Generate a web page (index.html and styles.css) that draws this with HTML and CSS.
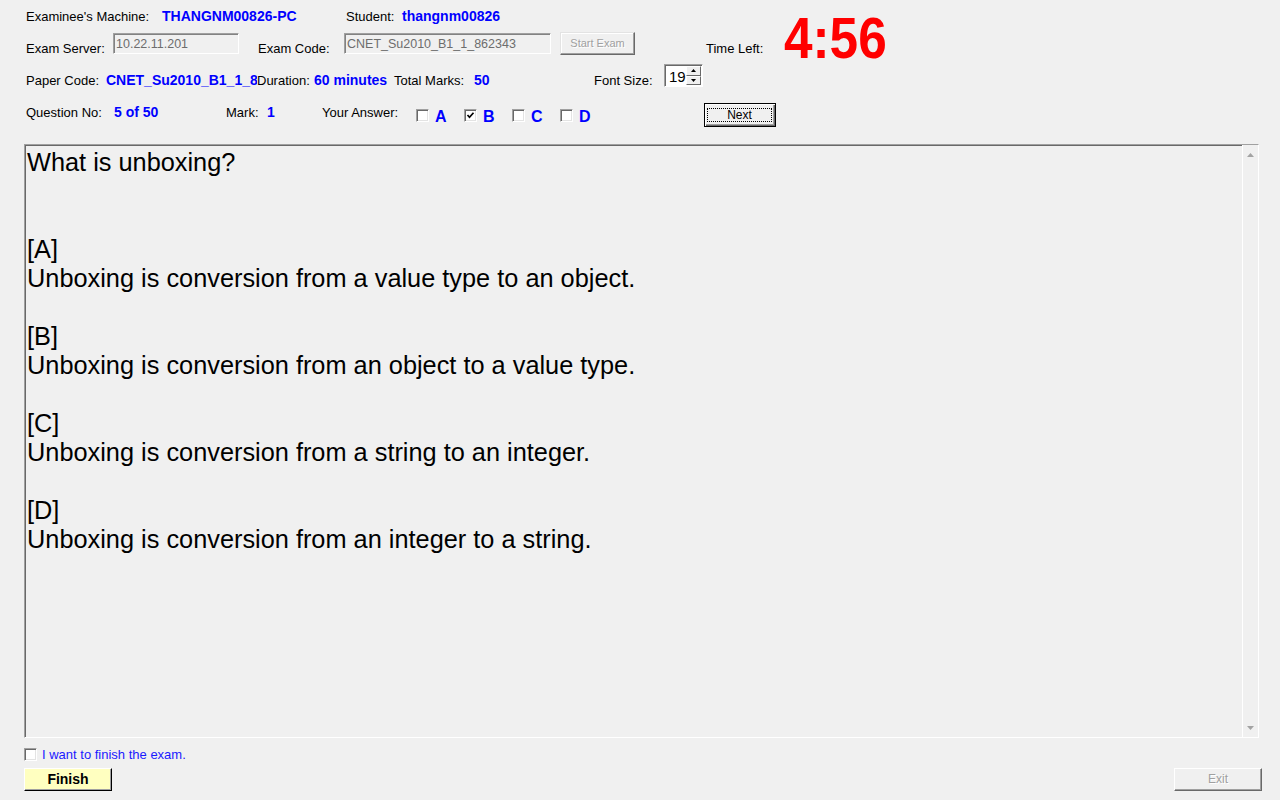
FILE: index.html
```html
<!DOCTYPE html>
<html>
<head>
<meta charset="utf-8">
<title>Exam</title>
<link rel="stylesheet" href="styles.css">
</head>
<body>
<div class="header">
  <div class="row row-1">
    <span class="lbl machine-lbl">Examinee's Machine:</span>
    <span class="val machine-val">THANGNM00826-PC</span>
    <span class="lbl student-lbl">Student:</span>
    <span class="val">thangnm00826</span>
  </div>
  <div class="row row-2">
    <span class="lbl server-lbl">Exam Server:</span>
    <div class="tb server-box">10.22.11.201</div>
    <span class="lbl code-lbl">Exam Code:</span>
    <div class="tb code-box">CNET_Su2010_B1_1_862343</div>
    <div class="btn-disabled start-btn">Start Exam</div>
    <span class="lbl time-lbl">Time Left:</span>
    <span class="timer">4:56</span>
  </div>
  <div class="row row-3">
    <span class="lbl paper-lbl">Paper Code:</span>
    <div class="paper-clip"><span class="val paper-val">CNET_Su2010_B1_1_862343</span></div>
    <span class="lbl dur-lbl">Duration:</span>
    <span class="val dur-val">60 minutes</span>
    <span class="lbl total-lbl">Total Marks:</span>
    <span class="val total-val">50</span>
    <span class="lbl font-lbl">Font Size:</span>
    <div class="spin">
      <span class="spin-val">19</span>
      <div class="spin-btns">
        <div class="spin-btn"><svg width="5" height="3" viewBox="0 0 5 3"><polygon points="0,3 2.5,0 5,3" fill="#000"/></svg></div>
        <div class="spin-btn"><svg width="5" height="3" viewBox="0 0 5 3"><polygon points="0,0 2.5,3 5,0" fill="#000"/></svg></div>
      </div>
    </div>
  </div>
  <div class="row row-4">
    <span class="lbl qno-lbl">Question No:</span>
    <span class="val qno-val">5 of 50</span>
    <span class="lbl mark-lbl">Mark:</span>
    <span class="val mark-val">1</span>
    <span class="lbl ans-lbl">Your Answer:</span>
    <div class="opt"><span class="cb"></span><span class="opt-letter">A</span></div>
    <div class="opt"><span class="cb"><svg width="9" height="9" viewBox="0 0 9 9"><polyline points="1.5,4 3.5,6.2 7.5,1.8" fill="none" stroke="#000" stroke-width="1.7"/></svg></span><span class="opt-letter">B</span></div>
    <div class="opt"><span class="cb"></span><span class="opt-letter">C</span></div>
    <div class="opt"><span class="cb"></span><span class="opt-letter">D</span></div>
    <div class="next-btn"><span class="next-focus">Next</span></div>
  </div>
</div>

<div class="question">
  <div class="q-text">
    <div class="line">What is unboxing?</div>
    <div class="line"></div>
    <div class="line"></div>
    <div class="line">[A]</div>
    <div class="line">Unboxing is conversion from a value type to an object.</div>
    <div class="line"></div>
    <div class="line">[B]</div>
    <div class="line">Unboxing is conversion from an object to a value type.</div>
    <div class="line"></div>
    <div class="line">[C]</div>
    <div class="line">Unboxing is conversion from a string to an integer.</div>
    <div class="line"></div>
    <div class="line">[D]</div>
    <div class="line">Unboxing is conversion from an integer to a string.</div>
  </div>
  <div class="scroll">
    <div class="arrow"><svg width="7" height="4" viewBox="0 0 7 4"><polygon points="0,4 3.5,0 7,4" fill="#a3a3a3"/></svg></div>
    <div class="arrow"><svg width="7" height="4" viewBox="0 0 7 4"><polygon points="0,0 3.5,4 7,0" fill="#a3a3a3"/></svg></div>
  </div>
</div>

<div class="finish-check">
  <span class="cb"></span>
  <span class="finish-lbl">I want to finish the exam.</span>
</div>
<div class="actions">
  <div class="finish-btn">Finish</div>
  <div class="exit-btn">Exit</div>
</div>
</body>
</html>
```
FILE: styles.css
```css
* { box-sizing: border-box; }
html, body { margin: 0; padding: 0; }
body {
  width: 1280px;
  height: 800px;
  overflow: hidden;
  background: #f0f0f0;
  font-family: "Liberation Sans", Arial, sans-serif;
  color: #000;
}

.header { padding-left: 26px; }
.row { display: flex; align-items: flex-start; }
.row-1 { height: 30px; }
.row-2 { height: 30px; }
.row-3 { height: 35px; }
.row-4 { height: 49px; }

.lbl { font-size: 13px; line-height: 15px; white-space: nowrap; }
.val { font-size: 14px; line-height: 16px; font-weight: bold; color: #0000ff; white-space: nowrap; }

.row-1 .lbl { margin-top: 9px; }
.row-1 .val { margin-top: 8px; }
.row-2 .lbl { margin-top: 11px; }
.row-3 .lbl { margin-top: 13px; }
.row-3 .val { margin-top: 12px; }
.row-4 .lbl { margin-top: 10px; }
.row-4 .val { margin-top: 9px; }

.machine-lbl { width: 136px; }
.machine-val { width: 184px; }
.student-lbl { width: 56px; }

.server-lbl { width: 87px; }
.server-box { width: 126px; }
.code-lbl { width: 86px; margin-left: 19px; }
.code-box { width: 207px; }
.start-btn { margin-left: 9px; width: 75px; }
.time-lbl { margin-left: 71px; width: 79px; }

.paper-lbl { width: 80px; }
.paper-clip { width: 151px; height: 28px; overflow: hidden; flex: none; }
.paper-val { display: block; }
.dur-lbl { width: 57px; }
.dur-val { width: 80px; }
.total-lbl { width: 80px; }
.total-val { width: 120px; }
.font-lbl { width: 70px; }

.qno-lbl { width: 88px; }
.qno-val { width: 112px; }
.mark-lbl { width: 41px; }
.mark-val { width: 55px; }
.ans-lbl { width: 94px; }

.tb {
  height: 21px;
  margin-top: 3px;
  border: 1px solid;
  border-color: #a0a0a0 #ffffff #ffffff #a0a0a0;
  box-shadow: inset 1px 1px 0 #828282;
  background: #f0f0f0;
  color: #6d6d6d;
  font-size: 12.5px;
  line-height: 17px;
  padding-top: 2px;
  padding-left: 2px;
  white-space: nowrap;
  overflow: hidden;
}

.btn-disabled {
  height: 23px;
  margin-top: 2px;
  border: 1px solid;
  border-color: #e3e3e3 #696969 #696969 #e3e3e3;
  box-shadow: inset -1px -1px 0 #a0a0a0, inset 1px 1px 0 #ffffff;
  background: #f0f0f0;
  color: #a0a0a0;
  text-shadow: 1px 1px 0 #ffffff;
  font-size: 11px;
  line-height: 20px;
  text-align: center;
}

.timer {
  font-size: 57px;
  line-height: 57px;
  font-weight: bold;
  color: #ff0000;
  margin-top: -20px;
  margin-left: -1px;
  white-space: nowrap;
  transform: scaleX(0.9);
  transform-origin: left center;
}

.spin {
  margin-top: 4px;
  width: 39px;
  height: 23px;
  display: flex;
  background: #ffffff;
  border: 1px solid;
  border-color: #a0a0a0 #ffffff #ffffff #a0a0a0;
  box-shadow: inset 1px 1px 0 #696969;
  padding: 1px;
}
.spin-val {
  flex: 1;
  font-size: 15px;
  line-height: 20px;
  padding-left: 3px;
  padding-top: 1px;
}
.spin-btns {
  width: 16px;
  display: flex;
  flex-direction: column;
}
.spin-btn {
  flex: 1;
  display: flex;
  align-items: center;
  justify-content: center;
  background: #f0f0f0;
  border: 1px solid;
  border-color: #ffffff #696969 #696969 #ffffff;
}

.opt { width: 48px; display: flex; align-items: flex-start; }
.cb {
  width: 13px;
  height: 13px;
  flex: none;
  display: flex;
  align-items: center;
  justify-content: center;
  background: #ffffff;
  border: 1px solid;
  border-color: #a0a0a0 #ffffff #ffffff #a0a0a0;
  box-shadow: inset 1px 1px 0 #696969, inset -1px -1px 0 #e3e3e3;
}
.opt .cb { margin-top: 14px; }
.opt-letter {
  margin-left: 6px;
  margin-top: 12px;
  font-size: 16px;
  line-height: 19px;
  font-weight: bold;
  color: #0000ff;
}

.next-btn {
  margin-left: 96px;
  margin-top: 8px;
  width: 72px;
  height: 24px;
  border: 1px solid #000000;
  background: #f0f0f0;
  box-shadow: inset 1px 1px 0 #ffffff, inset -1px -1px 0 #696969, inset -2px -2px 0 #a0a0a0;
  padding: 4px 3px 4px 2px;
  display: flex;
}
.next-focus {
  flex: 1;
  border: 1px dotted #000000;
  font-size: 12px;
  line-height: 12px;
  text-align: center;
}

.question {
  margin-left: 24px;
  width: 1235px;
  height: 594px;
  display: flex;
  border: 1px solid;
  border-color: #a0a0a0 #ffffff #ffffff #a0a0a0;
  box-shadow: inset 1px 1px 0 #696969;
}
.q-text {
  flex: 1;
  padding: 3px 0 0 2px;
  font-size: 25.33px;
  line-height: 29px;
}
.line { height: 29px; white-space: pre; }

.scroll {
  width: 16px;
  border-left: 1px solid #ffffff;
  background: #f0f0f0;
  display: flex;
  flex-direction: column;
  justify-content: space-between;
  padding: 1px 0;
}
.arrow {
  height: 17px;
  display: flex;
  align-items: center;
  justify-content: center;
}

.finish-check {
  display: flex;
  align-items: center;
  height: 13px;
  margin: 10px 0 0 24px;
}
.finish-lbl {
  margin-left: 5px;
  font-size: 13px;
  line-height: 15px;
  color: #1a1aff;
  white-space: nowrap;
}

.actions {
  display: flex;
  justify-content: space-between;
  margin: 7px 18px 0 24px;
}
.finish-btn {
  width: 88px;
  height: 23px;
  background: #ffffc0;
  border: 1px solid;
  border-color: #ffffff #000000 #000000 #ffffff;
  box-shadow: inset -1px -1px 0 #a0a0a0;
  font-size: 14px;
  line-height: 21px;
  font-weight: bold;
  text-align: center;
}
.exit-btn {
  width: 88px;
  height: 23px;
  background: #f0f0f0;
  border: 1px solid;
  border-color: #ffffff #696969 #696969 #ffffff;
  box-shadow: inset -1px -1px 0 #a0a0a0;
  color: #a0a0a0;
  text-shadow: 1px 1px 0 #ffffff;
  font-size: 12px;
  line-height: 20px;
  text-align: center;
}
```
